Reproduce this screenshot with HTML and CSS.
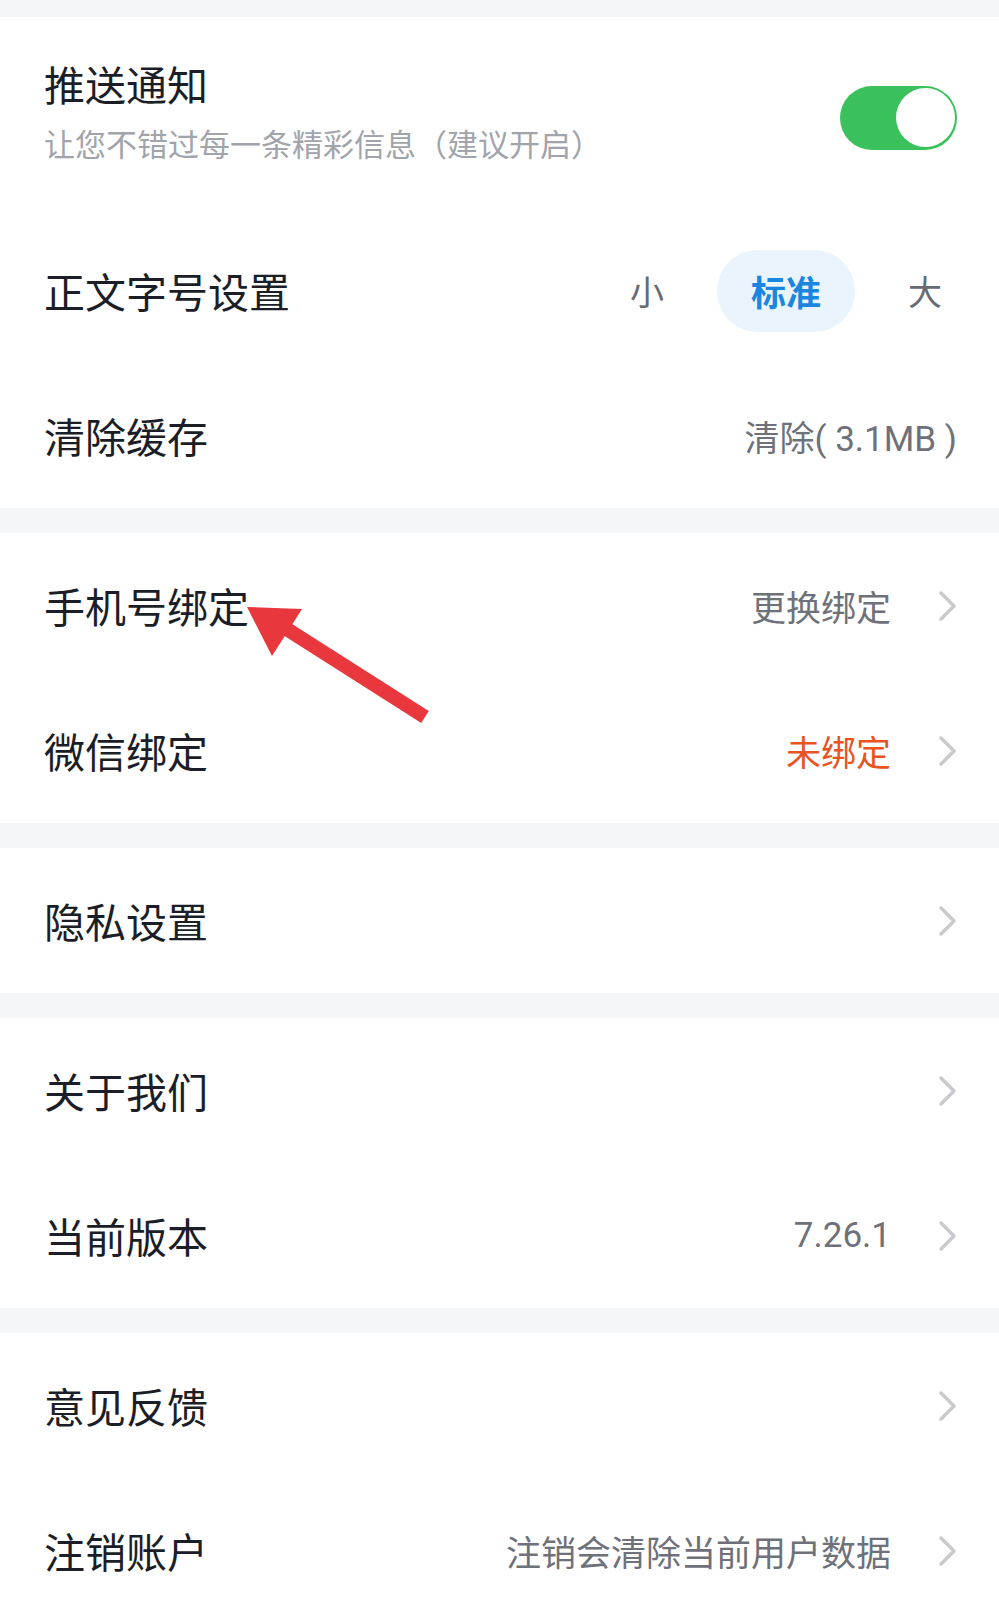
FILE: index.html
```html
<!DOCTYPE html>
<html lang="zh-CN">
<head>
  <meta charset="UTF-8">
  <meta name="viewport" content="width=device-width, initial-scale=1.0">
  <title>设置</title>
  <link rel="stylesheet" href="styles.css">
</head>
<body>

  <div class="page">

    <div class="group">
      <div class="row row-push">
        <div class="push-text">
          <div class="title">推送通知</div>
          <div class="subtitle">让您不错过每一条精彩信息（建议开启）</div>
        </div>
        <div class="switch on"><span class="knob"></span></div>
      </div>

      <div class="row">
        <div class="title">正文字号设置</div>
        <div class="size-picker">
          <span class="size-opt">小</span>
          <span class="size-opt active">标准</span>
          <span class="size-opt">大</span>
        </div>
      </div>

      <div class="row">
        <div class="title">清除缓存</div>
        <div class="value">清除( 3.1MB )</div>
      </div>
    </div>

    <div class="group">
      <div class="row">
        <div class="title">手机号绑定</div>
        <div class="extra">
          <span class="value">更换绑定</span>
          <svg class="chevron" viewBox="0 0 19 32"><path d="M3 3 L16 16 L3 29"/></svg>
        </div>
      </div>
      <div class="row">
        <div class="title">微信绑定</div>
        <div class="extra">
          <span class="value warn">未绑定</span>
          <svg class="chevron" viewBox="0 0 19 32"><path d="M3 3 L16 16 L3 29"/></svg>
        </div>
      </div>
    </div>

    <div class="group">
      <div class="row">
        <div class="title">隐私设置</div>
        <div class="extra">
          <svg class="chevron" viewBox="0 0 19 32"><path d="M3 3 L16 16 L3 29"/></svg>
        </div>
      </div>
    </div>

    <div class="group">
      <div class="row">
        <div class="title">关于我们</div>
        <div class="extra">
          <svg class="chevron" viewBox="0 0 19 32"><path d="M3 3 L16 16 L3 29"/></svg>
        </div>
      </div>
      <div class="row">
        <div class="title">当前版本</div>
        <div class="extra">
          <span class="value">7.26.1</span>
          <svg class="chevron" viewBox="0 0 19 32"><path d="M3 3 L16 16 L3 29"/></svg>
        </div>
      </div>
    </div>

    <div class="group">
      <div class="row">
        <div class="title">意见反馈</div>
        <div class="extra">
          <svg class="chevron" viewBox="0 0 19 32"><path d="M3 3 L16 16 L3 29"/></svg>
        </div>
      </div>
      <div class="row">
        <div class="title">注销账户</div>
        <div class="extra">
          <span class="value">注销会清除当前用户数据</span>
          <svg class="chevron" viewBox="0 0 19 32"><path d="M3 3 L16 16 L3 29"/></svg>
        </div>
      </div>
    </div>

    <!-- annotation arrow drawn over the screenshot -->
    <svg class="arrow" viewBox="0 0 999 800" width="999" height="800">
      <line x1="282" y1="626" x2="425" y2="717" stroke="#e8383d" stroke-width="14"/>
      <polygon points="247,607 302,609 272,656" fill="#e8383d"/>
    </svg>

  </div>

</body>
</html>
```

FILE: styles.css
```css
body {
  margin: 0;
  background-color: #f5f6f8;
  font-family: "Noto Sans CJK SC", "Noto Sans", sans-serif;
}

.page {
  position: relative;
  width: 999px;
  padding-top: 17px;
  display: flex;
  flex-direction: column;
  gap: 25px;
  overflow: hidden;
  height: 1583px;
}

.group {
  background-color: #fff;
}

.row {
  height: 145px;
  display: flex;
  align-items: center;
  justify-content: space-between;
  padding: 0 42px 0 44px;
}

.row-push {
  height: 201px;
}

.push-text {
  display: flex;
  flex-direction: column;
  gap: 16px;
  padding-bottom: 15px;
}

.title {
  font-size: 41px;
  line-height: 1.2;
  color: #1b1e27;
}

.subtitle {
  font-size: 31px;
  line-height: 1.2;
  color: #a1a4ab;
}

/* toggle */
.switch {
  width: 117px;
  height: 64px;
  border-radius: 32px;
  background-color: #3bc15c;
  display: flex;
  align-items: center;
  justify-content: flex-end;
  padding: 0 2px;
  box-sizing: border-box;
}

.knob {
  width: 59px;
  height: 59px;
  border-radius: 50%;
  background-color: #fff;
}

/* font size picker */
.size-picker {
  display: flex;
  align-items: center;
  gap: 38px;
}

.size-opt {
  font-size: 34px;
  color: #676b74;
  padding: 0 15px;
}

.size-opt.active {
  height: 82px;
  padding: 0 34px;
  border-radius: 41px;
  background-color: #e9f4fd;
  color: #1a86e0;
  font-weight: bold;
  font-size: 35px;
  display: flex;
  align-items: center;
}

.value {
  font-family: Roboto, "Noto Sans CJK SC", sans-serif;
  font-size: 35px;
  color: #6e7179;
}

.value.warn {
  color: #e9531f;
}

.extra {
  display: flex;
  align-items: center;
  gap: 47px;
}

.chevron {
  width: 19px;
  height: 32px;
  fill: none;
  stroke: #c8cace;
  stroke-width: 3.5;
  stroke-linecap: round;
  stroke-linejoin: round;
}

.arrow {
  position: absolute;
  left: 0;
  top: 0;
  pointer-events: none;
}
```
